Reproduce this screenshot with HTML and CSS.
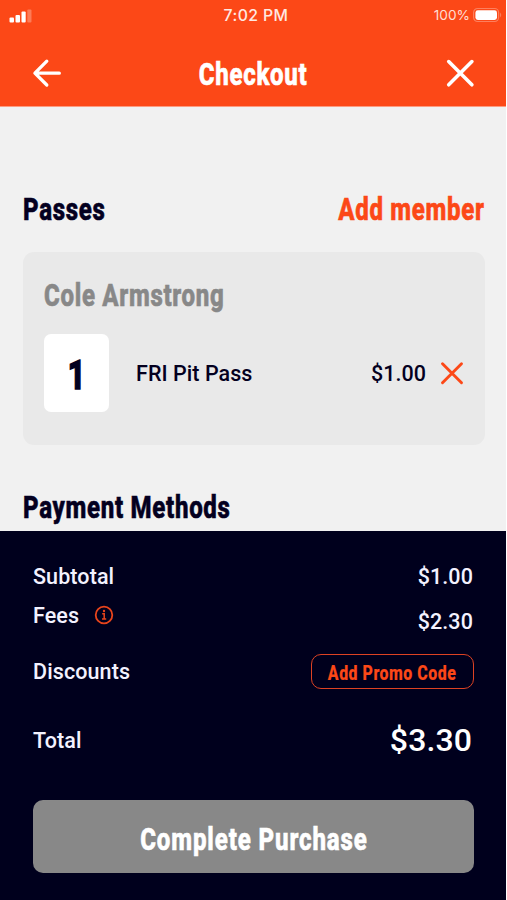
FILE: index.html
```html
<!DOCTYPE html>
<html lang="en">
<head>
<meta charset="utf-8">
<title>Checkout</title>
<link rel="stylesheet" href="styles.css">
</head>
<body>
<div class="app">
  <header class="header">
    <div class="status">
      <svg class="signal" width="24" height="16" viewBox="0 0 24 16"><g fill="#fff"><rect x=".5" y="10.5" width="4.5" height="5" rx="1"/><rect x="6.5" y="8" width="4.5" height="7.5" rx="1"/><rect x="12.5" y="4.5" width="4.2" height="11" rx="1"/><rect x="18.3" y="2.5" width="4.2" height="13" rx="1" opacity=".28"/></g></svg>
      <span class="time">7:02 PM</span>
      <span class="battery"><span>100%</span>
        <svg width="31" height="16" viewBox="0 0 31 16"><rect x="1.6" y="1.5" width="25" height="13" rx="4" fill="none" stroke="#fff" stroke-opacity=".3" stroke-width="1.2"/><rect x="3.4" y="3.3" width="21.6" height="9.6" rx="2.4" fill="#fff"/><path d="M28.2 5.5q2 2.5 0 5z" fill="#fff" opacity=".35"/></svg>
      </span>
    </div>
    <nav class="navbar">
      <svg width="30" height="30" viewBox="0 0 30 30" fill="none" stroke="#fff" stroke-width="3.3" stroke-linecap="round" stroke-linejoin="round"><path d="M27.3 15.2H3.4M14.8 3.2 2.9 15.2l11.9 11.8"/></svg>
      <h1 class="cond title">Checkout</h1>
      <svg width="30" height="30" viewBox="0 0 30 30" fill="none" stroke="#fff" stroke-width="3.6" stroke-linecap="round"><path d="m3.7 3.6 23.2 23.2M26.9 3.6 3.7 26.8"/></svg>
    </nav>
  </header>
  <main class="content">
    <div class="section-head">
      <h2 class="cond passes">Passes</h2>
      <a class="cond add-member">Add member</a>
    </div>
    <section class="card">
      <h3 class="cond member">Cole Armstrong</h3>
      <div class="pass">
        <div class="qty"><span class="cond one">1</span></div>
        <span class="pass-name">FRI Pit Pass</span>
        <span class="price">$1.00</span>
        <svg width="24" height="24" viewBox="0 0 24 24" fill="none" stroke="#fc4817" stroke-width="2.9" stroke-linecap="round"><path d="m2.5 2.8 19 19M21.5 2.8l-19 19"/></svg>
      </div>
    </section>
    <h2 class="cond payment">Payment Methods</h2>
  </main>
  <footer class="summary">
    <div class="row subtotal"><span>Subtotal</span><span class="amount">$1.00</span></div>
    <div class="row fees"><span class="fee-label">Fees <svg width="20" height="20" viewBox="0 0 20 20"><circle cx="10" cy="10" r="8.3" fill="none" stroke="#e9441c" stroke-width="1.8"/><circle cx="10" cy="6" r="1.2" fill="#e9441c"/><path d="M8.2 8.8h2v5M8 14h4.2" fill="none" stroke="#e9441c" stroke-width="1.5"/></svg></span><span class="amount fee-amount">$2.30</span></div>
    <div class="row discounts"><span>Discounts</span><button class="promo"><span class="cond promo-text">Add Promo Code</span></button></div>
    <div class="row total"><span>Total</span><span class="total-amount">$3.30</span></div>
    <button class="complete"><span class="cond complete-text">Complete Purchase</span></button>
  </footer>
</div>
</body>
</html>
```
FILE: styles.css
```css
* { box-sizing: border-box; }
body { margin: 0; background: #fff; font-family: Roboto, "Liberation Sans", sans-serif; }
h1, h2, h3 { margin: 0; }
button { padding: 0; font-family: inherit; }
svg { display: block; flex: none; }
.app { width: 506px; height: 900px; overflow: hidden; display: flex; flex-direction: column; color: #04001f; }
.cond { display: block; width: max-content; font-size: 31.5px; line-height: 36px; font-weight: 800; letter-spacing: .9px; white-space: nowrap; transform-origin: 0 50%; transform: scaleX(.764); -webkit-text-stroke: .6px currentColor; }

.header { height: 107px; background: #fc4817; color: #fff; border-bottom: 1px solid #fd9b80; }
.status { height: 30px; padding: 0 3px 0 9px; display: grid; grid-template-columns: 1fr auto 1fr; align-items: center; }
.signal { margin-top: -1px; }
.time { font-family: Inter, sans-serif; font-size: 15.8px; font-weight: 500; letter-spacing: .4px; color: #ffe9e2; }
.battery { display: flex; justify-content: flex-end; align-items: center; gap: 2px; font-family: Inter, sans-serif; font-size: 13.7px; color: #ffdcd1; }
.navbar { height: 86px; padding: 0 31px 0 32px; display: flex; justify-content: space-between; align-items: center; }
.title { margin-top: 4px; transform-origin: 50% 50%; }

.content { height: 424px; background: #f1f1f1; padding: 85px 21px 0 23px; }
.section-head { display: flex; justify-content: space-between; height: 60px; }
.add-member { color: #fc4817; transform-origin: 100% 50%; }
.card { height: 193px; background: #e9e9e9; border-radius: 11px; padding: 26px 21px 0; }
.member { color: #888; }
.pass { margin-top: 20px; height: 78px; display: flex; align-items: center; }
.qty { width: 65px; height: 78px; margin-right: 27px; background: #fff; border-radius: 7px; display: flex; align-items: center; justify-content: center; }
.one { font-size: 40px; margin-top: 5px; transform-origin: 50% 50%; -webkit-text-stroke-width: 1.6px; }
.pass-name { font-size: 21.5px; font-weight: 500; letter-spacing: .05px; }
.price { margin-left: auto; margin-right: 14px; font-size: 21.5px; font-weight: 500; letter-spacing: .05px; }
.payment { margin-top: 45px; }

.summary { flex: 1; background: #00001d; color: #f3f2ff; padding: 26px 32px 0 33px; font-size: 21.5px; font-weight: 500; letter-spacing: .1px; }
.row { display: flex; justify-content: space-between; align-items: center; }
.amount { padding-right: 1px; }
.subtotal { height: 38px; }
.fees { height: 40px; }
.fee-label { display: flex; align-items: center; gap: 15px; }
.fee-amount { padding-top: 12px; }
.discounts { height: 73px; }
.promo { width: 163px; height: 35px; border: 1.5px solid #dd4223; border-radius: 10px; background: none; display: flex; justify-content: center; align-items: center; }
.promo-text { margin-top: 3px; color: #fc4817; font-size: 20.8px; letter-spacing: .7px; transform-origin: 50% 50%; -webkit-text-stroke-width: .2px; }
.total { height: 64px; }
.total-amount { font-size: 32px; color: #fff; padding-right: 2px; }
.complete { width: 441px; height: 73px; margin-top: 28px; border: 0; border-radius: 10px; background: #888; display: flex; justify-content: center; align-items: center; }
.complete-text { margin-top: 6px; color: #fff; letter-spacing: 1.15px; transform-origin: 50% 50%; }
```
